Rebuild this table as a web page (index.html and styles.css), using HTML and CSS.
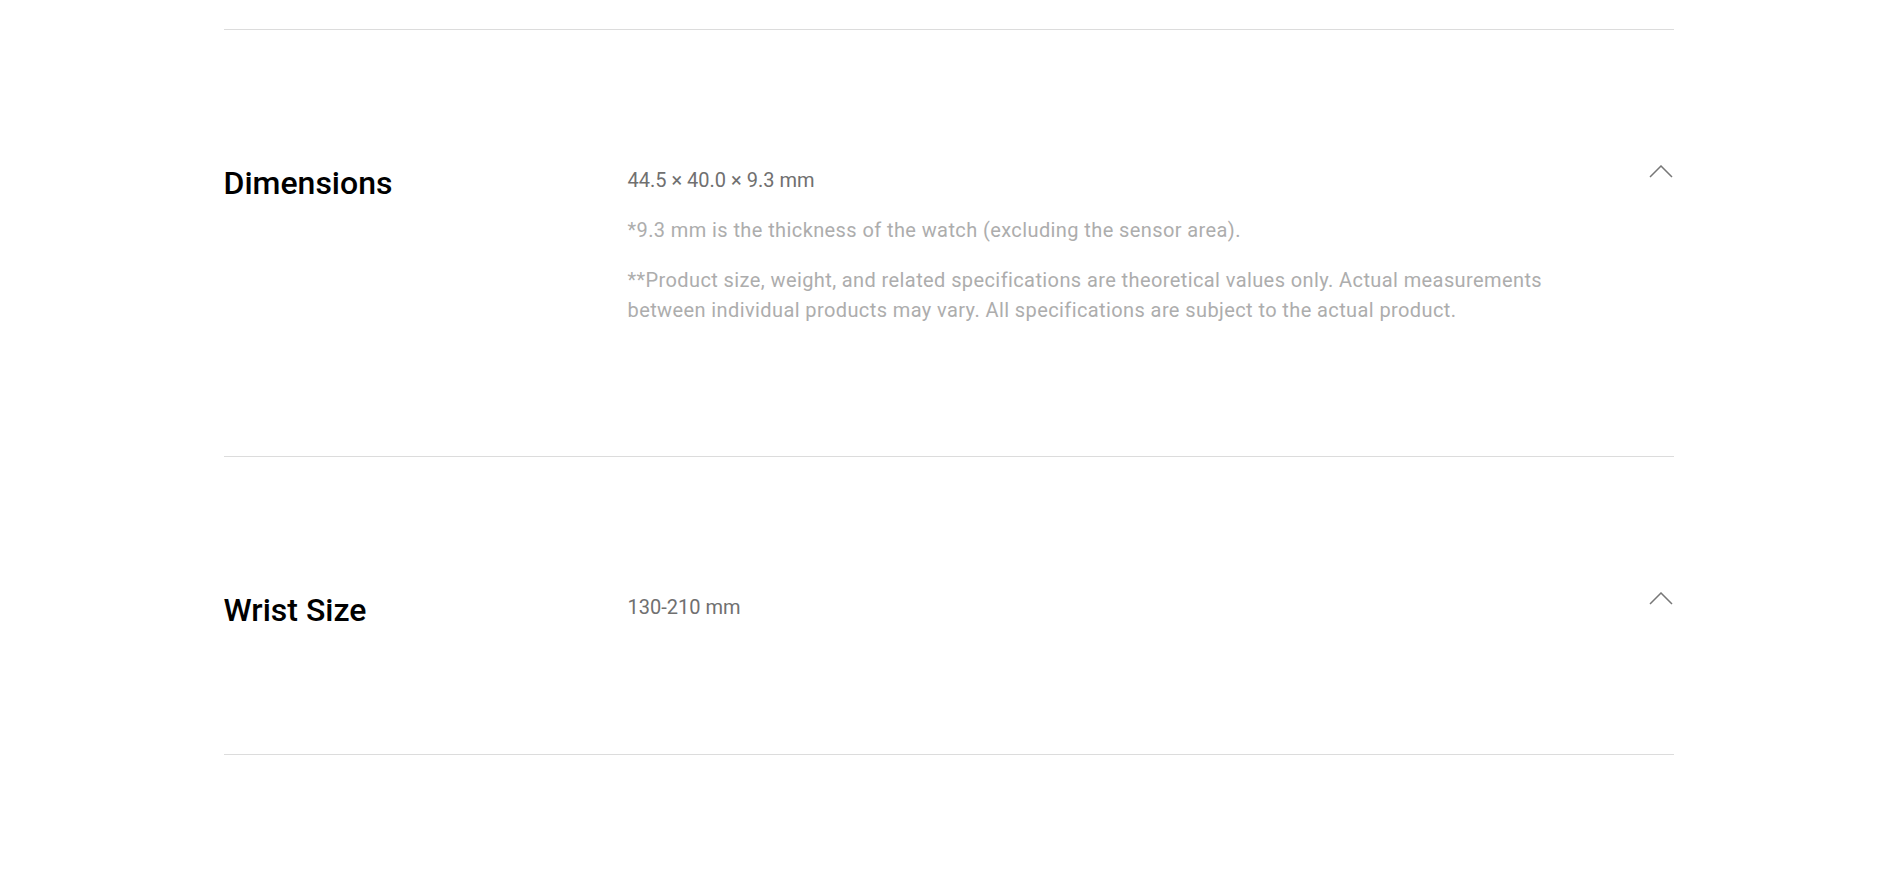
FILE: index.html
```html
<!DOCTYPE html>
<html lang="en">

<head>
    <meta charset="UTF-8">
    <title>Specs</title>
    <link rel="stylesheet" href="styles.css">
</head>

<body>
    <div class="specs">

        <div class="spec_row">
            <h3 class="spec_title">Dimensions</h3>
            <div class="spec_body">
                <p class="spec_value">44.5 × 40.0 × 9.3 mm</p>
                <p class="spec_note">*9.3 mm is the thickness of the watch (excluding the sensor area).</p>
                <p class="spec_note">**Product size, weight, and related specifications are theoretical values only. Actual measurements between individual products may vary. All specifications are subject to the actual product.</p>
            </div>
            <span class="spec_toggle">
                <svg width="24" height="13" viewBox="0 0 24 13"><polyline points="1,12 12,1 23,12" fill="none" stroke="#777" stroke-width="1.5"/></svg>
            </span>
        </div>

        <div class="spec_row">
            <h3 class="spec_title">Wrist Size</h3>
            <div class="spec_body">
                <p class="spec_value">130-210 mm</p>
            </div>
            <span class="spec_toggle">
                <svg width="24" height="13" viewBox="0 0 24 13"><polyline points="1,12 12,1 23,12" fill="none" stroke="#777" stroke-width="1.5"/></svg>
            </span>
        </div>

    </div>
</body>

</html>
```

FILE: styles.css
```css
body {
    margin: 0;
    background-color: white;
    font-family: Roboto, "Liberation Sans", sans-serif;
}

.specs {
    width: 1450px;
    margin: 0 auto;
    padding-top: 29px;
}

.spec_row {
    display: flex;
    align-items: flex-start;
    border-top: 1px solid #DCDCDC;
    padding: 135px 0 127px;
}

.spec_row:last-child {
    border-bottom: 1px solid #DCDCDC;
}

.spec_title {
    width: 404px;
    flex-shrink: 0;
    margin: 0;
    padding-top: 1px;
    font-size: 32px;
    line-height: 34px;
    font-weight: 500;
    color: #000;
}

.spec_body {
    width: 960px;
    display: flex;
    flex-direction: column;
    gap: 20px;
    padding-bottom: 4px;
}

.spec_body p {
    margin: 0;
    font-size: 20px;
    line-height: 30px;
}

.spec_value {
    color: #707070;
}

.spec_note {
    color: #ADADAD;
    letter-spacing: 0.4px;
}

.spec_toggle {
    margin-left: auto;
    margin-right: 1px;
    line-height: 0;
}
```
